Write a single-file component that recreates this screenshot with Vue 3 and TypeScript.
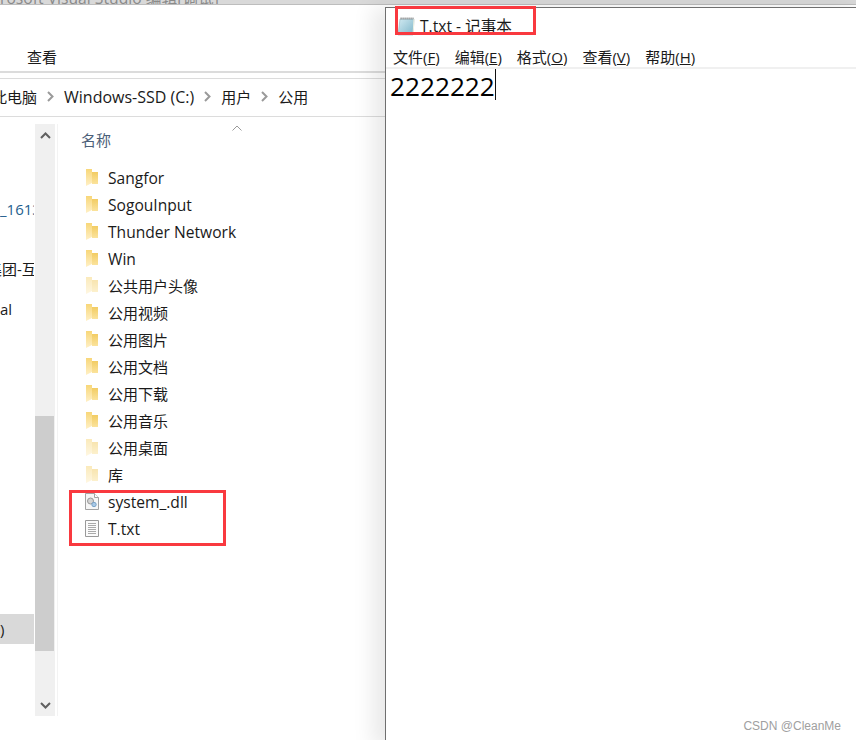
<script setup lang="ts">
interface Item { name: string; kind: 'folder' | 'pale' | 'dll' | 'txt' }
const items: Item[] = [
  { name: 'Sangfor', kind: 'folder' },
  { name: 'SogouInput', kind: 'folder' },
  { name: 'Thunder Network', kind: 'folder' },
  { name: 'Win', kind: 'folder' },
  { name: '公共用户头像', kind: 'pale' },
  { name: '公用视频', kind: 'folder' },
  { name: '公用图片', kind: 'folder' },
  { name: '公用文档', kind: 'folder' },
  { name: '公用下载', kind: 'folder' },
  { name: '公用音乐', kind: 'folder' },
  { name: '公用桌面', kind: 'pale' },
  { name: '库', kind: 'pale' },
  { name: 'system_.dll', kind: 'dll' },
  { name: 'T.txt', kind: 'txt' },
]
const crumbs = ['Windows-SSD (C:)', '用户', '公用']
const menus = [
  ['文件(', 'F', ')'],
  ['编辑(', 'E', ')'],
  ['格式(', 'O', ')'],
  ['查看(', 'V', ')'],
  ['帮助(', 'H', ')'],
]
const isLatin = (s: string) => /^[\x00-\x7f]+$/.test(s)
</script>

<template>
  <div class="desk">
    <div class="behind"><span>rosoft Visual Studio 编辑[调试]</span></div>

    <section class="explorer">
      <div class="ribbon"><span class="tab">查看</span></div>
      <div class="address">
        <span class="pc">此电脑</span>
        <template v-for="c in crumbs" :key="c">
          <svg class="sep" width="7" height="11" viewBox="0 0 7 11"><path d="M1 1l4.5 4.5L1 10" fill="none" stroke="#9a9a9a" stroke-width="2" /></svg>
          <span :class="{ latin: isLatin(c) }">{{ c }}</span>
        </template>
      </div>

      <div class="body">
        <aside class="nav">
          <div class="nav-items">
            <div class="nav-row r1"><span>_1613</span></div>
            <div class="nav-row r2"><span>集团-互</span></div>
            <div class="nav-row r3"><span>al</span></div>
            <div class="nav-row r4"><span>)</span></div>
          </div>
          <div class="scroll">
            <svg class="arrow" width="11" height="7" viewBox="0 0 11 7"><path d="M1 6l4.5-4.5L10 6" fill="none" stroke="#606060" stroke-width="2" /></svg>
            <div class="thumb"></div>
            <svg class="arrow down" width="11" height="7" viewBox="0 0 11 7"><path d="M1 1l4.5 4.5L10 1" fill="none" stroke="#606060" stroke-width="2" /></svg>
          </div>
        </aside>

        <main class="files">
          <div class="head">
            <span>名称</span>
            <svg class="sort" width="10" height="6" viewBox="0 0 10 6"><path d="M.5 5.5L5 1l4.5 4.5" fill="none" stroke="#9a9a9a" /></svg>
          </div>
          <ul class="list">
            <li v-for="it in items" :key="it.name">
              <svg v-if="it.kind === 'folder' || it.kind === 'pale'" class="ico fold" :class="{ pale: it.kind === 'pale' }" width="12" height="17" viewBox="0 0 12 17">
                <defs>
                  <linearGradient id="fb" x1="0" y1="0" x2="0" y2="1">
                    <stop offset="0" stop-color="#f2cc63" />
                    <stop offset="1" stop-color="#fbe39c" />
                  </linearGradient>
                  <linearGradient id="ff" x1="0" y1="0" x2="0" y2="1">
                    <stop offset="0" stop-color="#f8d779" />
                    <stop offset="1" stop-color="#fff0c6" />
                  </linearGradient>
                </defs>
                <path d="M6 3h6v12H6z" fill="url(#fb)" />
                <path d="M0 0h6v14l-6 3z" fill="url(#ff)" />
              </svg>
              <svg v-else-if="it.kind === 'dll'" class="ico doc" width="14" height="17" viewBox="0 0 14 17">
                <path d="M.5.5h9l4 4v12H.5z" fill="#f6f6f6" stroke="#a3a3a3" />
                <path d="M9.5.5v4h4" fill="#fff" stroke="#a3a3a3" />
                <circle cx="5.5" cy="8" r="3" fill="#d4d4d4" stroke="#999" />
                <circle cx="9" cy="11.5" r="2.2" fill="#a9c9e6" stroke="#7aa3c8" />
              </svg>
              <svg v-else class="ico doc" width="14" height="17" viewBox="0 0 14 17">
                <path d="M.5.5h13v16H.5z" fill="#fbfbfb" stroke="#999" />
                <path d="M3 3.5h8M3 5.5h8M3 7.5h8M3 9.5h8M3 11.5h8M3 13.5h8" stroke="#aaa" />
              </svg>
              <span :class="{ latin: isLatin(it.name) }">{{ it.name }}</span>
            </li>
          </ul>
        </main>
      </div>
    </section>

    <section class="notepad">
      <header class="np-title">
        <svg width="18" height="19" viewBox="0 0 18 19">
          <defs>
            <linearGradient id="np" x1="0" y1="0" x2="1" y2="1">
              <stop offset="0" stop-color="#d3ebf2" />
              <stop offset="1" stop-color="#7db5c9" />
            </linearGradient>
          </defs>
          <path d="M2 2h14l-1 16H0z" fill="url(#np)" stroke="#8fb0bc" stroke-width=".6" />
          <path d="M2.5 1.5h13" stroke="#8c8c8c" stroke-width="2" stroke-dasharray="1.2 .8" />
          <path d="M16 2l-1 16" stroke="#eef2e4" />
        </svg>
        <span>T.txt - 记事本</span>
      </header>
      <nav class="np-menu">
        <span v-for="m in menus" :key="m[1]">{{ m[0] }}<u>{{ m[1] }}</u>{{ m[2] }}</span>
      </nav>
      <div class="np-text"><span>2222222</span><i class="caret"></i></div>
    </section>

    <div class="mark box-files"></div>
    <div class="mark box-title"></div>
    <div class="credit">CSDN @CleanMe</div>
  </div>
</template>

<style>
html, body { margin: 0; background: #fff; }
</style>

<style scoped>
.desk {
  position: relative;
  width: 856px;
  height: 740px;
  overflow: hidden;
  background: #fff;
  color: #1a1a1a;
  font-family: "Open Sans", "Noto Sans CJK SC", sans-serif;
  font-size: 15px;
}
.latin { font-size: 15.6px; }
.behind {
  height: 4px;
  overflow: hidden;
  background: #d9d9d9;
  border-bottom: 1px solid #bdbdbd;
  color: #8a8a8a;
  font-size: 15.7px;
  white-space: nowrap;
}
.behind span { display: block; margin-top: -12px; line-height: 20px; }
.explorer {
  width: 385px;
  display: flex;
  flex-direction: column;
}
.ribbon {
  height: 68px;
  box-sizing: border-box;
  border-bottom: 2px solid #dcdcdc;
  padding: 42px 0 0 27px;
  line-height: 20px;
}
.address {
  margin-top: 5px;
  height: 39px;
  box-sizing: border-box;
  border-top: 1px solid #dcdcdc;
  border-bottom: 1px solid #dcdcdc;
  padding-bottom: 2px;
  display: flex;
  align-items: center;
  gap: 10px;
  overflow: hidden;
  white-space: nowrap;
}
.address .latin { font-size: 16px; }
.pc { margin-left: -8px; }
.sep { flex: none; }
.body {
  display: flex;
  margin-top: 7px;
  height: 592px;
}
.nav {
  display: flex;
  width: 58px;
  flex: none;
  border-right: 1px solid #f3f3f3;
  box-sizing: border-box;
}
.nav-items {
  width: 35px;
  flex: none;
  overflow: hidden;
  display: flex;
  flex-direction: column;
}
.nav-row {
  height: 30px;
  width: 34px;
  overflow: hidden;
  white-space: nowrap;
  line-height: 30px;
}
.r1 { margin-top: 70px; }
.r1 span { color: #1f5f8f; }
.r2 { margin-top: 30px; }
.r2 span { display: inline-block; margin-left: -13px; }
.r3 { margin-top: 10px; }
.r4 { margin-top: 290px; background: #d9d9d9; }
.scroll {
  width: 20px;
  flex: none;
  background: #f0f0f0;
  display: flex;
  flex-direction: column;
  align-items: center;
}
.arrow { margin-top: 8px; flex: none; }
.thumb {
  width: 19px;
  margin-top: 277px;
  margin-right: 1px;
  height: 235px;
  background: #cdcdcd;
  flex: none;
}
.arrow.down { margin-top: 51px; }
.files { flex: 1; min-width: 0; }
.head {
  position: relative;
  padding: 5px 0 0 23px;
  height: 30px;
  box-sizing: border-box;
  color: #4c6079;
  line-height: 22px;
}
.sort { position: absolute; left: 174px; top: 1px; }
.list {
  list-style: none;
  margin: 10px 0 0;
  padding: 0 0 0 28px;
}
.list li {
  height: 27px;
  display: flex;
  align-items: center;
  white-space: nowrap;
}
.ico { flex: none; }
.fold { margin-right: 10px; }
.doc { margin-left: -1px; margin-right: 9px; }
.pale { opacity: .5; }
.notepad {
  position: absolute;
  left: 385px;
  top: 7px;
  width: 480px;
  height: 740px;
  box-sizing: border-box;
  background: #fff;
  border: 1px solid #6f6f6f;
  border-right: 0;
  box-shadow: -12px 0 20px rgba(0, 0, 0, .09);
}
.np-title {
  height: 29px;
  display: flex;
  align-items: flex-end;
  gap: 4px;
  padding-left: 12px;
  font-size: 15.6px;
  line-height: 22px;
  box-sizing: border-box;
}
.np-title svg { margin-bottom: 1px; }
.np-menu {
  height: 32px;
  display: flex;
  align-items: center;
  gap: 15px;
  padding: 8px 0 0 7px;
  font-size: 15px;
  border-bottom: 2px solid #f0f0f0;
  box-sizing: border-box;
  white-space: nowrap;
}
.np-text {
  display: flex;
  align-items: flex-start;
  padding-left: 4px;
  font-size: 26.2px;
  line-height: 35px;
  color: #000;
}
.caret {
  display: block;
  width: 1px;
  height: 31px;
  background: #111;
}
.mark {
  position: absolute;
  box-sizing: border-box;
  border: 3px solid #f9393f;
}
.box-files { left: 69px; top: 490px; width: 157px; height: 56px; }
.box-title { left: 395px; top: 6px; width: 141px; height: 29px; }
.credit {
  position: absolute;
  right: 15px;
  top: 719px;
  font-family: "Liberation Sans", sans-serif;
  font-size: 12px;
  color: #a0a0a0;
}
</style>
